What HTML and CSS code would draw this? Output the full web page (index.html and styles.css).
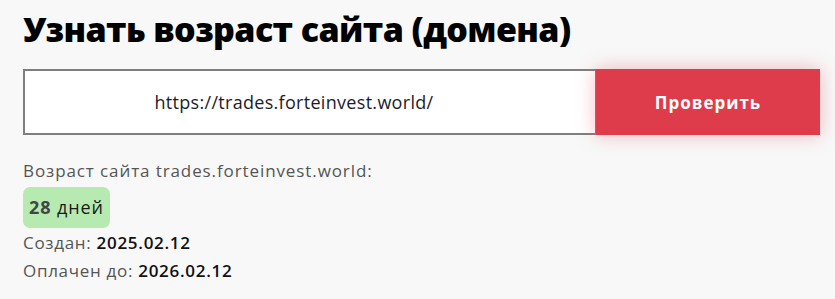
FILE: index.html
```html
<!DOCTYPE html>
<html lang="ru">
<head>
<meta charset="utf-8">
<link rel="stylesheet" href="styles.css">
</head>
<body>
<main class="page">
  <h1 class="title">Узнать возраст сайта (домена)</h1>
  <form class="check">
    <div class="check-input">https://trades.forteinvest.world/</div>
    <button class="check-btn" type="button">Проверить</button>
  </form>
  <div class="result">
    <p class="label">Возраст сайта trades.forteinvest.world:</p>
    <div class="badge"><b>28</b> дней</div>
    <p class="line">Создан: <span class="val">2025.02.12</span></p>
    <p class="line">Оплачен до: <span class="val">2026.02.12</span></p>
  </div>
</main>
</body>
</html>
```
FILE: styles.css
```css
html, body {
  margin: 0;
  padding: 0;
  background: #f8f8f8;
}
body {
  font-family: "Open Sans", "Noto Sans", sans-serif;
  color: #222;
}
.page {
  padding: 8px 15px 0 23px;
}
.title {
  margin: 0;
  font-size: 34px;
  line-height: 42px;
  font-weight: 800;
  letter-spacing: -0.6px;
  color: #000;
}
.check {
  margin-top: 19px;
  display: flex;
  height: 66px;
}
.check-input {
  box-sizing: border-box;
  width: 574px;
  height: 66px;
  padding-right: 32px;
  border: 2px solid #7f7f7f;
  background: #fff;
  display: flex;
  align-items: center;
  justify-content: center;
  font-size: 18px;
  letter-spacing: 0.3px;
  color: #1c1c2a;
}
.check-btn {
  width: 224px;
  height: 66px;
  border: none;
  margin-left: -1px;
  background: #de3c4b;
  color: #fff;
  font-family: inherit;
  font-size: 17px;
  font-weight: 700;
  letter-spacing: 1px;
  box-shadow: 0 0 18px rgba(222, 60, 75, 0.35);
}
.result {
  margin-top: 24px;
}
.label {
  margin: 0;
  font-size: 17px;
  line-height: 24px;
  letter-spacing: 0.9px;
  color: #555;
}
.badge {
  display: inline-block;
  margin-top: 4px;
  padding: 0 6px;
  height: 41px;
  line-height: 41px;
  border-radius: 7px;
  background: #b6eab1;
  font-size: 18px;
  letter-spacing: 0.9px;
  color: #1a1a1a;
}
.badge b {
  color: #444;
}
.line {
  margin: 1px 0 0;
  font-size: 17px;
  line-height: 27px;
  letter-spacing: 0.7px;
  color: #555;
}
.val {
  color: #111;
  font-weight: 600;
}
```
